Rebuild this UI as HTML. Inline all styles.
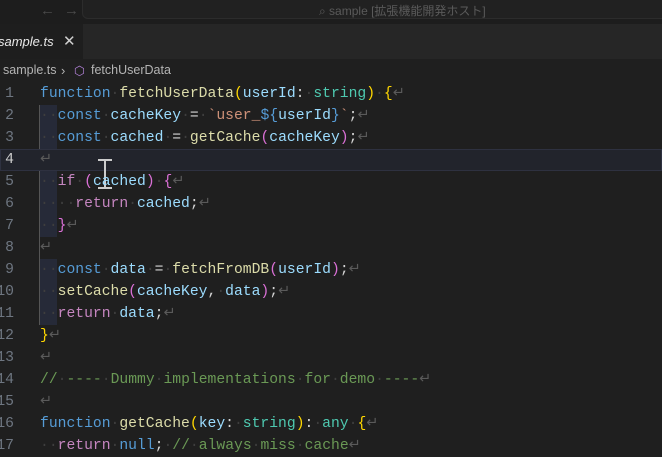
<!DOCTYPE html>
<html><head><meta charset="utf-8"><style>
*{margin:0;padding:0;box-sizing:border-box}
body{width:662px;height:450px;overflow:hidden;background:#1f1f1f;font-family:"Liberation Sans","Noto Sans CJK JP",sans-serif;position:relative}
#title{position:absolute;top:0;left:0;width:662px;height:24px;background:#1d1d1d}
#search{position:absolute;left:82px;top:-6px;width:600px;height:25px;border:1px solid #2c2c2c;border-radius:6px;background:#212121}
#search span{position:absolute;left:236px;top:7px;font-size:12px;color:#5a5a5a}
#nav{position:absolute;left:40px;top:2px;color:#4a4a4a;font-size:15px;letter-spacing:9px}
#tabs{position:absolute;top:24px;left:0;width:662px;height:35px;background:#262626}
#tab{position:absolute;left:0;top:0;width:83px;height:35px;background:#1e1e1e}
#tab .n{position:absolute;left:-2px;top:10px;font-size:13px;font-style:italic;color:#e8e8e8}
#tab .x{position:absolute;left:63px;top:8px;font-size:15px;color:#d0d0d0}
#crumb{position:absolute;top:59px;left:0;height:22px;font-size:12.5px;color:#b4b4b4}
#crumb span{position:absolute;top:4px;white-space:nowrap}
#ed{position:absolute;top:83px;left:0;width:662px}
.l{position:absolute;left:0;width:662px;height:22px;font-family:"Liberation Mono",monospace;font-size:14.7px;line-height:22px;white-space:pre;color:#d4d4d4}
.num{position:absolute;right:648px;color:#6e7681;text-align:right}
.c{position:absolute;left:40px}
.d{color:#3e3e3e}.r{color:#5a5a5a}
.k{color:#569cd6}.f{color:#dcdcaa}.v{color:#9cdcfe}.t{color:#4ec9b0}.s{color:#ce9178}.p{color:#c586c0}.y{color:#ffd700}.pb{color:#da70d6}.bl{color:#179fff}.cm{color:#6a9955}.w{color:#d4d4d4}
.guide{position:absolute;left:40px;width:17px;background:#262a38}
</style></head><body>
<div id="title"><div id="nav">←→</div><div id="search"><span>⌕ sample [拡張機能開発ホスト]</span></div></div>
<div id="tabs"><div id="tab"><span class="n">sample.ts</span><span class="x">✕</span></div></div>
<div id="crumb"><span style="left:3px">sample.ts</span><span style="left:61px;font-size:13px">›</span><span style="left:74px;color:#b180d7">⬡</span><span style="left:91px">fetchUserData</span></div>
<div id="ed">
<div class="guide" style="top:22px;height:44px"></div>
<div class="guide" style="top:88px;height:66px"></div>
<div class="guide" style="top:176px;height:66px"></div>
<div style="position:absolute;left:39px;top:22px;width:1px;height:220px;background:#555"></div>
<div style="position:absolute;left:0;top:66px;width:662px;height:22px;border:1px solid #2e3140;background:#22242c"></div>
<div style="position:absolute;left:98px;top:76px;width:14px;height:2px;background:#ccc"></div>
<div style="position:absolute;left:104px;top:77px;width:2px;height:28px;background:#ccc"></div>
<div style="position:absolute;left:98px;top:104px;width:14px;height:2px;background:#ccc"></div>
<div class="l" style="top:0"><span class="num">1</span><span class="c"><span class="k">function</span><span class="d">·</span><span class="f">fetchUserData</span><span class="y">(</span><span class="v">userId</span>:<span class="d">·</span><span class="t">string</span><span class="y">)</span><span class="d">·</span><span class="y">{</span><span class="r">↵</span></span></div>
<div class="l" style="top:22px"><span class="num">2</span><span class="c"><span class="d">··</span><span class="k">const</span><span class="d">·</span><span class="v">cacheKey</span><span class="d">·</span>=<span class="d">·</span><span class="s">`user_</span><span class="k">${</span><span class="v">userId</span><span class="k">}</span><span class="s">`</span>;<span class="r">↵</span></span></div>
<div class="l" style="top:44px"><span class="num">3</span><span class="c"><span class="d">··</span><span class="k">const</span><span class="d">·</span><span class="v">cached</span><span class="d">·</span>=<span class="d">·</span><span class="f">getCache</span><span class="pb">(</span><span class="v">cacheKey</span><span class="pb">)</span>;<span class="r">↵</span></span></div>
<div class="l" style="top:66px"><span class="num" style="color:#ccc">4</span><span class="c"><span class="r">↵</span></span></div>
<div class="l" style="top:88px"><span class="num">5</span><span class="c"><span class="d">··</span><span class="p">if</span><span class="d">·</span><span class="pb">(</span><span class="v">cached</span><span class="pb">)</span><span class="d">·</span><span class="pb">{</span><span class="r">↵</span></span></div>
<div class="l" style="top:110px"><span class="num">6</span><span class="c"><span class="d">····</span><span class="p">return</span><span class="d">·</span><span class="v">cached</span>;<span class="r">↵</span></span></div>
<div class="l" style="top:132px"><span class="num">7</span><span class="c"><span class="d">··</span><span class="pb">}</span><span class="r">↵</span></span></div>
<div class="l" style="top:154px"><span class="num">8</span><span class="c"><span class="r">↵</span></span></div>
<div class="l" style="top:176px"><span class="num">9</span><span class="c"><span class="d">··</span><span class="k">const</span><span class="d">·</span><span class="v">data</span><span class="d">·</span>=<span class="d">·</span><span class="f">fetchFromDB</span><span class="pb">(</span><span class="v">userId</span><span class="pb">)</span>;<span class="r">↵</span></span></div>
<div class="l" style="top:198px"><span class="num">10</span><span class="c"><span class="d">··</span><span class="f">setCache</span><span class="pb">(</span><span class="v">cacheKey</span>,<span class="d">·</span><span class="v">data</span><span class="pb">)</span>;<span class="r">↵</span></span></div>
<div class="l" style="top:220px"><span class="num">11</span><span class="c"><span class="d">··</span><span class="p">return</span><span class="d">·</span><span class="v">data</span>;<span class="r">↵</span></span></div>
<div class="l" style="top:242px"><span class="num">12</span><span class="c"><span class="y">}</span><span class="r">↵</span></span></div>
<div class="l" style="top:264px"><span class="num">13</span><span class="c"><span class="r">↵</span></span></div>
<div class="l" style="top:286px"><span class="num">14</span><span class="c"><span class="cm">//<span class="d">·</span>----<span class="d">·</span>Dummy<span class="d">·</span>implementations<span class="d">·</span>for<span class="d">·</span>demo<span class="d">·</span>----</span><span class="r">↵</span></span></div>
<div class="l" style="top:308px"><span class="num">15</span><span class="c"><span class="r">↵</span></span></div>
<div class="l" style="top:330px"><span class="num">16</span><span class="c"><span class="k">function</span><span class="d">·</span><span class="f">getCache</span><span class="y">(</span><span class="v">key</span>:<span class="d">·</span><span class="t">string</span><span class="y">)</span>:<span class="d">·</span><span class="t">any</span><span class="d">·</span><span class="y">{</span><span class="r">↵</span></span></div>
<div class="l" style="top:352px"><span class="num">17</span><span class="c"><span class="d">··</span><span class="p">return</span><span class="d">·</span><span class="k">null</span>;<span class="d">·</span><span class="cm">//<span class="d">·</span>always<span class="d">·</span>miss<span class="d">·</span>cache</span><span class="r">↵</span></span></div>
</div>
</body></html>
